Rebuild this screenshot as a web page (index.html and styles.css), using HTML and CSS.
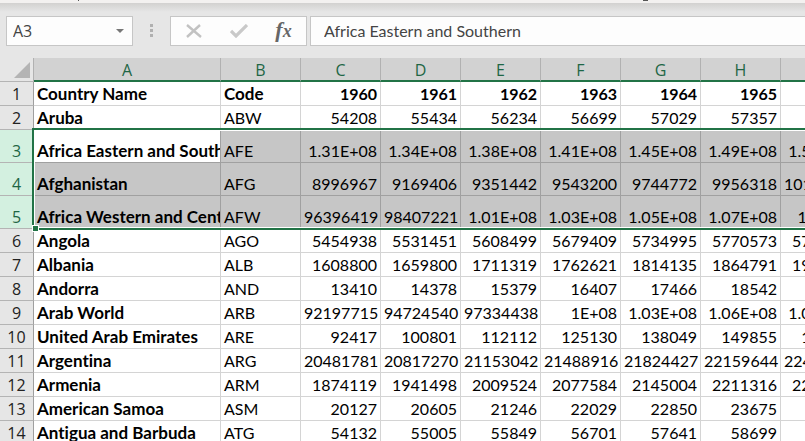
FILE: index.html
```html
<!DOCTYPE html>
<html lang="en">
<head>
    <meta charset="UTF-8">
    <meta name="viewport" content="width=device-width, initial-scale=1.0">
    <title>Population by Country</title>
    <link rel="stylesheet" href="styles.css">
</head>
<body>
    <!-- Bottom edge of the ribbon -->
    <div class="ribbon">
        <svg width="720" height="3" viewBox="0 0 720 3" fill="#555"><path d="M78 0h1v1h-1zM643 0h5v1h-5z"/></svg>
    </div>

    <!-- Formula bar -->
    <header class="formula-bar">
        <div class="name-box">
            <input type="text" class="name-input" value="A3" aria-label="Name box">
            <button type="button" class="name-toggle" aria-label="Show names">
                <svg width="8" height="4" viewBox="0 0 8 4"><path d="M0 0h8L4 4z" fill="#777"/></svg>
            </button>
        </div>

        <svg class="grip" width="3" height="14" viewBox="0 0 3 14" fill="#b0b0b0">
            <rect width="3" height="3"/>
            <rect y="5" width="3" height="3"/>
            <rect y="10" width="3" height="3"/>
        </svg>

        <div class="actions">
            <button type="button" aria-label="Cancel">
                <svg width="16" height="14" viewBox="0 0 16 14" fill="none" stroke="#c2c2c2" stroke-width="2.4"><path d="M1 1l14 12M14 1L1 13"/></svg>
            </button>
            <button type="button" aria-label="Enter">
                <svg width="18" height="14" viewBox="0 0 18 14" fill="none" stroke="#c9c9c9" stroke-width="3.2"><path d="M1 7l5 5L17 1"/></svg>
            </button>
            <button type="button" class="fx" aria-label="Insert function">f<span>x</span></button>
        </div>

        <input type="text" class="formula-input" value="Africa Eastern and Southern" aria-label="Formula">
    </header>

    <!-- Sheet -->
    <main class="sheet">
        <table>
            <colgroup>
                <col class="col-head">
                <col class="col-name">
                <col span="8" class="col-data">
            </colgroup>
            <thead>
                <tr>
                    <td class="corner">
                        <button type="button" aria-label="Select all">
                            <svg width="16" height="16" viewBox="0 0 16 16"><path d="M16 0v16H0z" fill="#b4b4b4"/></svg>
                        </button>
                    </td>
                    <th>A</th><th>B</th><th>C</th><th>D</th><th>E</th><th>F</th><th>G</th><th>H</th><th>I</th>
                </tr>
            </thead>
            <tbody>
                <tr class="titles"><th>1</th><td>Country Name</td><td>Code</td><td>1960</td><td>1961</td><td>1962</td><td>1963</td><td>1964</td><td>1965</td><td>1966</td></tr>
                <tr><th>2</th><td>Aruba</td><td>ABW</td><td>54208</td><td>55434</td><td>56234</td><td>56699</td><td>57029</td><td>57357</td><td>57702</td></tr>
                <tr class="selected"><th>3</th><td class="active">Africa Eastern and Southern</td><td>AFE</td><td>1.31E+08</td><td>1.34E+08</td><td>1.38E+08</td><td>1.41E+08</td><td>1.45E+08</td><td>1.49E+08</td><td>1.53E+08</td></tr>
                <tr class="selected"><th>4</th><td>Afghanistan</td><td>AFG</td><td>8996967</td><td>9169406</td><td>9351442</td><td>9543200</td><td>9744772</td><td>9956318</td><td>10174840</td></tr>
                <tr class="selected"><th>5</th><td>Africa Western and Central</td><td>AFW</td><td>96396419</td><td>98407221</td><td>1.01E+08</td><td>1.03E+08</td><td>1.05E+08</td><td>1.07E+08</td><td>1.1E+08</td></tr>
                <tr><th>6</th><td>Angola</td><td>AGO</td><td>5454938</td><td>5531451</td><td>5608499</td><td>5679409</td><td>5734995</td><td>5770573</td><td>5781305</td></tr>
                <tr><th>7</th><td>Albania</td><td>ALB</td><td>1608800</td><td>1659800</td><td>1711319</td><td>1762621</td><td>1814135</td><td>1864791</td><td>1914573</td></tr>
                <tr><th>8</th><td>Andorra</td><td>AND</td><td>13410</td><td>14378</td><td>15379</td><td>16407</td><td>17466</td><td>18542</td><td>19646</td></tr>
                <tr><th>9</th><td>Arab World</td><td>ARB</td><td>92197715</td><td>94724540</td><td>97334438</td><td>1E+08</td><td>1.03E+08</td><td>1.06E+08</td><td>1.09E+08</td></tr>
                <tr><th>10</th><td>United Arab Emirates</td><td>ARE</td><td>92417</td><td>100801</td><td>112112</td><td>125130</td><td>138049</td><td>149855</td><td>159979</td></tr>
                <tr><th>11</th><td>Argentina</td><td>ARG</td><td>20481781</td><td>20817270</td><td>21153042</td><td>21488916</td><td>21824427</td><td>22159644</td><td>22494031</td></tr>
                <tr><th>12</th><td>Armenia</td><td>ARM</td><td>1874119</td><td>1941498</td><td>2009524</td><td>2077584</td><td>2145004</td><td>2211316</td><td>2276038</td></tr>
                <tr><th>13</th><td>American Samoa</td><td>ASM</td><td>20127</td><td>20605</td><td>21246</td><td>22029</td><td>22850</td><td>23675</td><td>24473</td></tr>
                <tr><th>14</th><td>Antigua and Barbuda</td><td>ATG</td><td>54132</td><td>55005</td><td>55849</td><td>56701</td><td>57641</td><td>58699</td><td>59912</td></tr>
            </tbody>
        </table>
        <div class="selection"></div>
    </main>
</body>
</html>
```
FILE: styles.css
```css
/* General Styles */
* {
    box-sizing: border-box;
}

body {
    display: flex;
    flex-direction: column;
    height: 100vh;
    margin: 0;
    overflow: hidden;
    background-color: #e6e6e6;
    color: #000;
    font-family: Lato, "Liberation Sans", sans-serif;
    font-size: 16px;
    font-variant-ligatures: none;
}

button {
    display: flex;
    align-items: center;
    justify-content: center;
    padding: 0;
    border: none;
    background: none;
    cursor: pointer;
}

.ribbon {
    display: flex;
    flex: none;
    height: 3px;
    overflow: hidden;
    background-color: #f3f1f0;
}

/* Formula bar */
.formula-bar {
    display: flex;
    flex: none;
    align-items: center;
    padding: 13px 0 12px 6px;
    background-image: linear-gradient(#d2d1d0, #e6e6e6 9px);
}

.name-box,
.actions,
.formula-input {
    height: 30px;
    border: 1px solid #c6c6c6;
    background-color: #fdfdfd;
}

.name-box {
    display: flex;
    width: 127px;
}

.name-input {
    flex: 1;
    min-width: 0;
    padding: 0 6px;
    border: none;
    background: none;
    color: #444;
    font: 16px "Open Sans", sans-serif;
}

.name-toggle {
    width: 24px;
}

.grip {
    margin: 0 17px;
}

.actions {
    display: flex;
    width: 137px;
    margin-right: 3px;
}

.actions button {
    flex: 1;
}

.actions .fx {
    align-items: baseline;
    color: #666;
    font: italic bold 22px/26px "Liberation Serif", serif;
}

.fx span {
    font-size: 18px;
}

.formula-input {
    flex: 1;
    min-width: 0;
    padding: 0 13px 2px;
    border-right: none;
    color: #444;
    font: inherit;
}

input:focus {
    outline: none;
}

/* Sheet */
.sheet {
    position: relative;
    flex: 1;
    overflow: hidden;
    background-color: #fff;
}

table {
    width: 861px;
    table-layout: fixed;
    border-spacing: 0;
}

.col-head {
    width: 34px;
}

.col-name {
    width: 187px;
}

.col-data {
    width: 80px;
}

th,
td {
    height: 24px;
    padding: 0 3px 1px;
    overflow: hidden;
    line-height: 20px;
    text-align: right;
    vertical-align: bottom;
    white-space: nowrap;
}

td {
    border-right: 1px solid #d4d4d4;
    border-bottom: 1px solid #d4d4d4;
}

th {
    color: #222;
    font: 16px/20px "Open Sans", sans-serif;
    text-align: center;
}

thead th {
    padding-bottom: 0;
    border-right: 1px solid #b1b1b1;
    border-bottom: 2px solid #217346;
    background-color: #d2d2d2;
    color: #1e6645;
}

tbody th {
    padding: 0 0 1px;
    border-right: 1px solid #9f9f9f;
    border-bottom: 1px solid #b4b4b4;
    background-color: #e6e6e6;
}

.corner {
    border-right-color: #b1b1b1;
    border-bottom-color: #b4b4b4;
    background-color: #e6e6e6;
}

.corner button {
    margin: 0 0 2px auto;
}

td:nth-child(2),
td:nth-child(3) {
    text-align: left;
}

td:nth-child(2),
.titles td {
    font-weight: bold;
}

td:nth-child(2),
.titles td:nth-child(3) {
    font-size: 17px;
}

/* Selected rows */
.selected td {
    height: 33px;
    border-color: #a0a0a0;
    background-color: #c6c6c6;
}

.selected .active {
    background-color: #fff;
}

.selected th {
    background-color: #d3f0e0;
    color: #1e6645;
}

.selection {
    position: absolute;
    top: 70px;
    right: -8px;
    left: 32px;
    height: 102px;
    border: 2px solid #217346;
    box-shadow: inset 0 0 0 1px #fff;
    pointer-events: none;
}

.selection::after {
    content: "";
    position: absolute;
    bottom: -3px;
    left: -1px;
    width: 5px;
    height: 5px;
    background-color: #217346;
    box-shadow: 0 0 0 1px #fff;
}
```
